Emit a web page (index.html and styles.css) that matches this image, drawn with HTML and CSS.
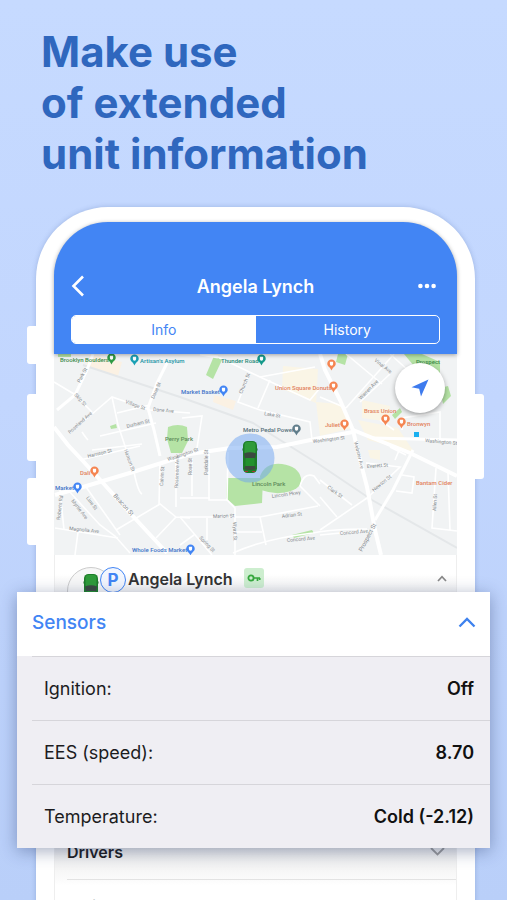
FILE: index.html
```html
<!DOCTYPE html>
<html lang="en">
<head>
    <meta charset="UTF-8">
    <meta name="viewport" content="width=device-width, initial-scale=1">
    <title>Extended unit information</title>
    <link rel="stylesheet" href="styles.css">
</head>
<body>
<main class="promo">
    <h1>Make use<br>of extended<br>unit information</h1>

    <div class="phone">
        <span class="key mute"></span>
        <span class="key vol-up"></span>
        <span class="key vol-down"></span>
        <span class="key power"></span>

        <header class="top">
            <div class="nav">
                <button type="button" class="icon-btn" aria-label="Back">
                    <svg width="14" height="22" viewBox="0 0 14 22"><path d="M12 1.5L2.5 11L12 20.5" fill="none" stroke="#fff" stroke-width="2.6"/></svg>
                </button>
                <h2>Angela Lynch</h2>
                <button type="button" class="icon-btn" aria-label="More">
                    <svg width="18" height="6" viewBox="0 0 18 6"><g fill="#fff"><circle cx="2.4" cy="3" r="2.3"/><circle cx="9" cy="3" r="2.3"/><circle cx="15.6" cy="3" r="2.3"/></g></svg>
                </button>
            </div>
            <div class="tabs">
                <button type="button" class="current">Info</button>
                <button type="button">History</button>
            </div>
        </header>

        <div class="map">
            <svg class="map-img" viewBox="54 354 403 201" preserveAspectRatio="xMidYMid slice">
                <defs>
                    <symbol id="pin" viewBox="0 0 10 13">
                        <path d="M5 .3A4.7 4.7 0 0 0 .3 5C.3 8 3.800 8.700 5 12.700C6.200 8.700 9.700 8 9.700 5A4.700 4.700 0 0 0 5 .3z"/>
                        <path d="M3.200 2.800h3.600v2.600a1.800 1.800 0 0 1-3.600 0z" fill="#fff"/>
                    </symbol>
                    <symbol id="car" viewBox="0 0 16 34">
                        <rect x="0.500" y="8" width="15" height="3" rx="1" fill="#1b5e20"/>
                        <rect x="1" y="1" width="14" height="32" rx="4.500" fill="#1c7d28"/>
                        <rect x="2.500" y="2" width="11" height="13" rx="3" fill="#2f9b3a"/>
                        <path d="M2 13.500q6-2.500 12 0l-1.200 5H3.200z" fill="#3b4a40"/>
                        <rect x="3.500" y="18" width="9" height="8" fill="#22912f"/>
                        <path d="M3.200 26h9.600l1 3q-5.800 2-11.600 0z" fill="#3b4a40"/>
                        <path d="M3 31.500h3M10 31.500h3" stroke="#a33" stroke-width="1"/>
                    </symbol>
                </defs>
                <rect x="54" y="354" width="403" height="201" fill="#f1f3f4"/>

                <!-- built-up areas -->
                <g fill="#fbf1e3">
                    <path d="M90 354l32 8l-4 14l-32-10z"/>
                    <path d="M214 395l22 6l-3 9l-20-8z"/>
                    <path d="M283 366l35 3l-2 34l-34-14z" fill="#faf5e6"/>
                    <path d="M316 402l24 2l12 24l-32 8z" fill="#faf5e6"/>
                    <path d="M358 420l40 8l16 24l-46-12z" fill="#faf5e6"/>
                    <path d="M362 400l28 6v16l-28-4z" fill="#faf5e6"/>
                    <path d="M368 450h12v10l-10-2z" fill="#faf5e6"/>
                </g>

                <!-- parks -->
                <g fill="#b5e3a5">
                    <path d="M168 427q10-4 19 0l1 14l-6 12h-11l-4-14z"/>
                    <path d="M206 375l8-19l8 4l-9 19z"/>
                    <path d="M227 478l36 0l-1 25l-27 3l-9-8z"/>
                    <path d="M260 476q6-14 22-12q16 2 19 14q2 10-14 14q-12 3-26-2z"/>
                    <path d="M338 354h10l-3 11l-9-3z"/>
                    <path d="M404 354h18l18 8v14l-26-10z"/>
                    <path d="M440 388l8-2l3 10l-8 8z"/>
                    <path d="M392 415l8-7l2 4l-7 7z"/>
                    <path d="M110 426l6-2l1 4l-6 1z"/>
                    <path d="M292 535l20-5l2 3l-20 5z"/>
                    <path d="M171 450l8-3l2 4l-8 2z"/>
                    <path d="M58 354h13v3H58z"/>
                </g>

                <!-- railway -->
                <path d="M83 365L180 397L253 423L320 465L372 500L457 548" fill="none" stroke="#e4e7e9" stroke-width="2"/>

                <!-- side streets -->
                <g fill="none" stroke="#fff" stroke-width="1.600">
                    <path d="M54 382l20 12l18 18"/>
                    <path d="M70 433L112 397L150 410L190 413"/>
                    <path d="M112 397L118 425L128 455"/>
                    <path d="M117 413L150 405"/>
                    <path d="M82 432q4 6 6 8M100 436l56-13M80 460L140 446"/>
                    <path d="M92 450L142 444M133 472L126 450"/>
                    <path d="M182 418l20-2l-5 32"/>
                    <path d="M218 357L260 377L310 400L320 388"/>
                    <path d="M260 377L315 367"/>
                    <path d="M248 377L238 402L260 410L310 422L312 440"/>
                    <path d="M258 408L270 380"/>
                    <path d="M228 452L227 500L235 508V555"/>
                    <path d="M180 517L260 517L318 506"/>
                    <path d="M180 517L212 555M207 518v22M180 545l14-10"/>
                    <path d="M233 553q30-14 80-20q20-4 54-4"/>
                    <path d="M260 517l6 28M235 532h27"/>
                    <path d="M192 458v38M209 454v46h18M180 498h30"/>
                    <path d="M300 486q4-14 14-10l6 8M300 486l20 20"/>
                    <path d="M134 472q4 20 8 22M160 462l-1 43M176 455v52"/>
                    <path d="M60 490l4 40M68 490L100 525L115 536L130 553"/>
                    <path d="M55 528L118 538M78 532l-3 23"/>
                    <path d="M86 487l34 48"/>
                    <path d="M116 530L160 504L176 517L190 518M176 517L156 538"/>
                    <path d="M320 397L346 408M346 408L394 354"/>
                    <path d="M346 354L382 384M360 402l30-28M390 354l20 18"/>
                    <path d="M320 530L367 498L400 467L366 463"/>
                    <path d="M320 480L352 505M320 497L337 517M320 535L372 530"/>
                    <path d="M436 468l-4 60l25 3M448 472l2 58"/>
                    <path d="M380 420l14 10M402 430v-12l38-6v28"/>
                    <path d="M406 455l-16-8M395 460l5-12M402 475l12 2l-2 16l-16-2"/>
                </g>

                <!-- main roads -->
                <g fill="none" stroke="#fff" stroke-width="3">
                    <path d="M57 410L75 395L87 370L93 354"/>
                    <path d="M54 427L68 445L82 460L103 483L130 513L167 553" stroke-width="4"/>
                    <path d="M55 495L83 487L133 472L190 454L230 448L277 447L320 438L353 432" stroke-width="4"/>
                    <path d="M167 363L157 383L148 408L154 430L160 456"/>
                    <path d="M320 354L325 370L340 400L353 430L358 452L367 487L375 530L381 555" stroke-width="4"/>
                    <path d="M353 430L410 453L457 476" stroke-width="4"/>
                    <path d="M372 438L457 440"/>
                    <path d="M413 450L393 490L375 520"/>
                    <path d="M200 354L218 357"/>
                </g>

                <g class="street">
                    <text transform="translate(80 383) rotate(-62)">Park St</text>
                    <text transform="translate(74 395) rotate(48)">Skip St</text>
                    <text transform="translate(70 434) rotate(-42)">Roseland Ave</text>
                    <text transform="translate(154 399) rotate(-66)">Dane St</text>
                    <text transform="translate(125 403) rotate(20)">Village St</text>
                    <text transform="translate(153 411) rotate(5)">Dane Ave</text>
                    <text transform="translate(127 428) rotate(-14)">Durham St</text>
                    <text transform="translate(88 458) rotate(-14)">Harrison St</text>
                    <text transform="translate(124 450) rotate(70)">Hanson St</text>
                    <text transform="translate(113 496) rotate(48)" class="big">Beacon St</text>
                    <text transform="translate(71 501) rotate(52)">Myrtle Ave</text>
                    <text transform="translate(86 498) rotate(54)">Line St</text>
                    <text transform="translate(69 530) rotate(6)">Magnolia Ave</text>
                    <text transform="translate(60 520) rotate(-83)">Roberts Rd</text>
                    <text transform="translate(168 461) rotate(-18)">Washington St</text>
                    <text transform="translate(163 486) rotate(-86)">Calvin St</text>
                    <text transform="translate(178 488) rotate(-88)">Rossmore Ave</text>
                    <text transform="translate(192 475) rotate(-90)">Rose St</text>
                    <text transform="translate(208 475) rotate(-90)">Parkdale St</text>
                    <text transform="translate(242 394) rotate(-68)">Church St</text>
                    <text transform="translate(264 415) rotate(10)">Lake St</text>
                    <text transform="translate(313 443) rotate(-7)">Washington St</text>
                    <text transform="translate(361 400) rotate(-46)">Warren Ave</text>
                    <text transform="translate(354 442) rotate(76)">Webster Ave</text>
                    <text transform="translate(374 361) rotate(38)">Vinal Ave</text>
                    <text transform="translate(425 442) rotate(5)">Washington St</text>
                    <text transform="translate(367 468) rotate(-4)">Everett St</text>
                    <text transform="translate(374 492) rotate(-40)">Newton St</text>
                    <text transform="translate(327 488) rotate(36)">Clark St</text>
                    <text transform="translate(340 535) rotate(-5)">Concord Ave</text>
                    <text transform="translate(362 552) rotate(-62)" class="big">Prospect St</text>
                    <text transform="translate(436 511) rotate(-87)">Allen St</text>
                    <text transform="translate(213 518) rotate(-2)">Marion St</text>
                    <text transform="translate(282 518) rotate(-7)">Adrian St</text>
                    <text transform="translate(272 498) rotate(-8)">Lincoln Pkwy</text>
                    <text transform="translate(287 542) rotate(-5)">Concord Ave</text>
                    <text transform="translate(233 522) rotate(88)">Wyatt St</text>
                    <text transform="translate(199 538) rotate(46)">Spring St</text>
                </g>

                <g class="place">
                    <text x="60" y="362" fill="#3d8b4a">Brooklyn Boulders</text>
                    <text x="140" y="363" fill="#1793a5">Artisan's Asylum</text>
                    <text x="221" y="363" fill="#1f8a7a">Thunder Road</text>
                    <text x="181" y="394" fill="#3e74c9">Market Basket</text>
                    <text x="243" y="432" fill="#56707a">Metro Pedal Power</text>
                    <text x="275" y="390" fill="#e2825c">Union Square Donuts</text>
                    <text x="364" y="413" fill="#e2825c">Brass Union</text>
                    <text x="325" y="427" fill="#e2825c">Juliet</text>
                    <text x="407" y="426" fill="#e2825c">Bronwyn</text>
                    <text x="416" y="485" fill="#e2825c">Bantam Cider</text>
                    <text x="80" y="475" fill="#e2825c">Dali</text>
                    <text x="55" y="490" fill="#3e74c9">Market</text>
                    <text x="132" y="552" fill="#3e74c9">Whole Foods Market</text>
                    <text x="165" y="441" fill="#5d8a5a">Perry Park</text>
                    <text x="252" y="486" fill="#5d8a5a">Lincoln Park</text>
                    <text x="416" y="364" fill="#3d8b4a">Prospect</text>
                </g>

                <use href="#pin" x="107" y="353" width="9" height="12" fill="#2f9a45"/>
                <use href="#pin" x="130" y="354" width="9" height="12" fill="#1aa0b4"/>
                <use href="#pin" x="257" y="354" width="9" height="12" fill="#15998a"/>
                <use href="#pin" x="219" y="385" width="9" height="12" fill="#4285f4"/>
                <use href="#pin" x="292" y="424" width="9" height="12" fill="#607d8b"/>
                <use href="#pin" x="327" y="359" width="9" height="12" fill="#f58551"/>
                <use href="#pin" x="329" y="381" width="9" height="12" fill="#f58551"/>
                <use href="#pin" x="340" y="419" width="9" height="12" fill="#f58551"/>
                <use href="#pin" x="381" y="414" width="9" height="12" fill="#f58551"/>
                <use href="#pin" x="397" y="417" width="9" height="12" fill="#f58551"/>
                <use href="#pin" x="90" y="466" width="9" height="12" fill="#f58551"/>
                <use href="#pin" x="73" y="482" width="9" height="12" fill="#4285f4"/>
                <use href="#pin" x="186" y="544" width="9" height="12" fill="#4285f4"/>
                <rect x="414" y="432" width="5" height="5" fill="#1ab0f0"/>

                <circle cx="250" cy="458" r="24.500" fill="#6ea3f2" fill-opacity=".5"/>
                <use href="#car" x="242" y="440" width="16" height="34"/>
            </svg>
            <button type="button" class="locate" aria-label="Locate unit">
                <svg width="18" height="18" viewBox="0 0 18 18"><path d="M17.500.5L.5 8.200L8.200 9.800L10 17.500z" fill="#3e7bee"/></svg>
            </button>
        </div>

        <div class="unit">
            <span class="avatar">
                <svg width="16" height="34"><use href="#car" width="16" height="34"/></svg>
            </span>
            <span class="parking">P</span>
            <strong>Angela Lynch</strong>
            <span class="ignition">
                <svg width="14" height="8" viewBox="0 0 14 8"><path d="M7 4H13M10.500 4V7M12.700 4V6" fill="none" stroke="#36a83e" stroke-width="1.700"/><circle cx="4" cy="4" r="2.600" fill="none" stroke="#36a83e" stroke-width="1.800"/></svg>
            </span>
            <svg class="arrow" width="10" height="7" viewBox="0 0 10 7"><path d="M1 6L5 1.700L9 6" fill="none" stroke="#888" stroke-width="1.700"/></svg>
        </div>

        <section class="sensors">
            <button type="button" class="sensors-head">
                Sensors
                <svg width="18" height="11" viewBox="0 0 18 11"><path d="M1.500 9.500L9 2L16.500 9.500" fill="none" stroke="#3e82ee" stroke-width="2.300"/></svg>
            </button>
            <dl>
                <div><dt>Ignition:</dt><dd>Off</dd></div>
                <div><dt>EES (speed):</dt><dd>8.70</dd></div>
                <div><dt>Temperature:</dt><dd>Cold (-2.12)</dd></div>
            </dl>
        </section>

        <div class="more">
            <button type="button">
                Drivers
                <svg width="15" height="9" viewBox="0 0 15 9"><path d="M1 1L7.500 7.500L14 1" fill="none" stroke="#999" stroke-width="1.800"/></svg>
            </button>
            <button type="button">
                Trailers
                <svg width="15" height="9" viewBox="0 0 15 9"><path d="M1 1L7.500 7.500L14 1" fill="none" stroke="#999" stroke-width="1.800"/></svg>
            </button>
        </div>
    </div>
</main>
</body>
</html>
```
FILE: styles.css
```css
*{
    box-sizing: border-box;
}
body{
    margin: 0;
    font-family: Inter, "Liberation Sans", sans-serif;
    color: #1c1c1e;
}
button{
    font: inherit;
    color: inherit;
    background: none;
    border: 0;
    padding: 0;
    cursor: pointer;
}
svg{
    display: block;
    flex: none;
}
.promo{
    height: 100vh;
    overflow: hidden;
    padding: 26px 32px 0 36px;
    background: linear-gradient(#c6daff, #c2d6fe 45%, #b9cff9);
}
h1{
    margin: 0 0 28px 5px;
    font-size: 42px;
    line-height: 51px;
    font-weight: 700;
    color: #2f67be;
    white-space: nowrap;
}

/* phone */
.phone{
    position: relative;
    min-height: 900px;
    padding: 15px 18px;
    background: #fff;
    border-radius: 72px;
    box-shadow: 0 0 5px rgba(70,100,160,.3);
}
.key{
    position: absolute;
    left: -9px;
    width: 9px;
    height: 67px;
    background: #fff;
    border-radius: 3px 0 0 3px;
}
.mute{
    top: 119px;
    height: 38px;
}
.vol-up{
    top: 187px;
}
.vol-down{
    top: 271px;
}
.power{
    top: 187px;
    left: auto;
    right: -9px;
    height: 85px;
    border-radius: 0 3px 3px 0;
}
.top{
    position: relative;
    z-index: 1;
    padding: 50px 17px 10px;
    background: #4285f4;
    border-radius: 54px 54px 0 0;
    color: #fff;
    box-shadow: 0 1px 4px rgba(0,0,0,.35);
}
.nav{
    display: flex;
    align-items: center;
    justify-content: space-between;
    height: 28px;
    margin-bottom: 15px;
}
.nav h2{
    margin: 0;
    font-size: 18px;
    font-weight: 600;
}
.icon-btn{
    display: flex;
    width: 26px;
}
.icon-btn:last-child{
    justify-content: center;
}
.tabs{
    display: flex;
    height: 29px;
    border: 1px solid #fff;
    border-radius: 5px;
    overflow: hidden;
}
.tabs button{
    flex: 1;
    font-size: 14px;
}
.tabs .current{
    background: #fff;
    color: #4285f4;
}

/* map */
.map{
    position: relative;
}
.map-img{
    width: 100%;
    height: 201px;
}
.street{
    font: 5px Roboto, sans-serif;
    fill: #84898d;
}
.street .big{
    font-size: 6px;
}
.place{
    font: 500 6px Roboto, sans-serif;
}
.locate{
    position: absolute;
    top: 9px;
    right: 12px;
    display: flex;
    align-items: center;
    justify-content: center;
    width: 50px;
    height: 50px;
    border-radius: 50%;
    background: #fff;
    box-shadow: 0 2px 5px rgba(0,0,0,.35);
}

/* unit row */
.unit{
    display: flex;
    align-items: flex-start;
    height: 37px;
    padding: 12px 9px 0 12px;
    color: #333;
    background: linear-gradient(#fff 50%, #f3f3f3);
    border: solid #eee;
    border-width: 0 1px;
}
.avatar{
    display: flex;
    justify-content: center;
    width: 48px;
    height: 48px;
    padding-top: 5px;
    border: 1px solid #ccc;
    border-radius: 50%;
    background: #f7f7f7;
}
.parking{
    width: 26px;
    height: 26px;
    margin: 0 2px 0 -15px;
    border: 1px solid #4285f4;
    border-radius: 50%;
    background: #f2f6fe;
    color: #4285f4;
    font-size: 17px;
    line-height: 24px;
    font-weight: 700;
    text-align: center;
}
.unit strong{
    font-size: 16px;
    line-height: 24px;
    font-weight: 600;
}
.ignition{
    display: flex;
    align-items: center;
    justify-content: center;
    width: 20px;
    height: 20px;
    margin: 1px auto 0 11px;
    border-radius: 3px;
    background: #cdeecf;
}
.arrow{
    margin-top: 8px;
}

/* sensors card, wider than the phone */
.sensors{
    position: relative;
    z-index: 2;
    margin: 0 -33px 0 -37px;
    background: #efeef3;
    box-shadow: 0 3px 16px rgba(30,50,100,.4);
}
.sensors-head{
    display: flex;
    align-items: center;
    justify-content: space-between;
    width: 100%;
    height: 64px;
    padding: 0 14px 4px 15px;
    background: #fff;
    color: #4285f4;
    font-size: 19px;
    font-weight: 500;
}
dl{
    margin: 0;
    padding-left: 15px;
}
dl div{
    display: flex;
    align-items: center;
    justify-content: space-between;
    height: 64px;
    padding: 0 16px 0 12px;
    border-top: 1px solid #d6d5da;
    font-size: 18px;
}
dd{
    margin: 0;
    font-weight: 600;
    color: #111;
}

.more{
    margin-top: -22px;
    padding-left: 12px;
    border: solid #eee;
    border-width: 0 1px;
    background: linear-gradient(#e8e8e8 20px, #fff 60px);
}
.more button{
    display: flex;
    align-items: center;
    justify-content: space-between;
    width: 100%;
    height: 54px;
    padding: 0 11px 2px 0;
    border-bottom: 1px solid #e3e3e3;
    font-size: 16px;
    font-weight: 600;
}
```
